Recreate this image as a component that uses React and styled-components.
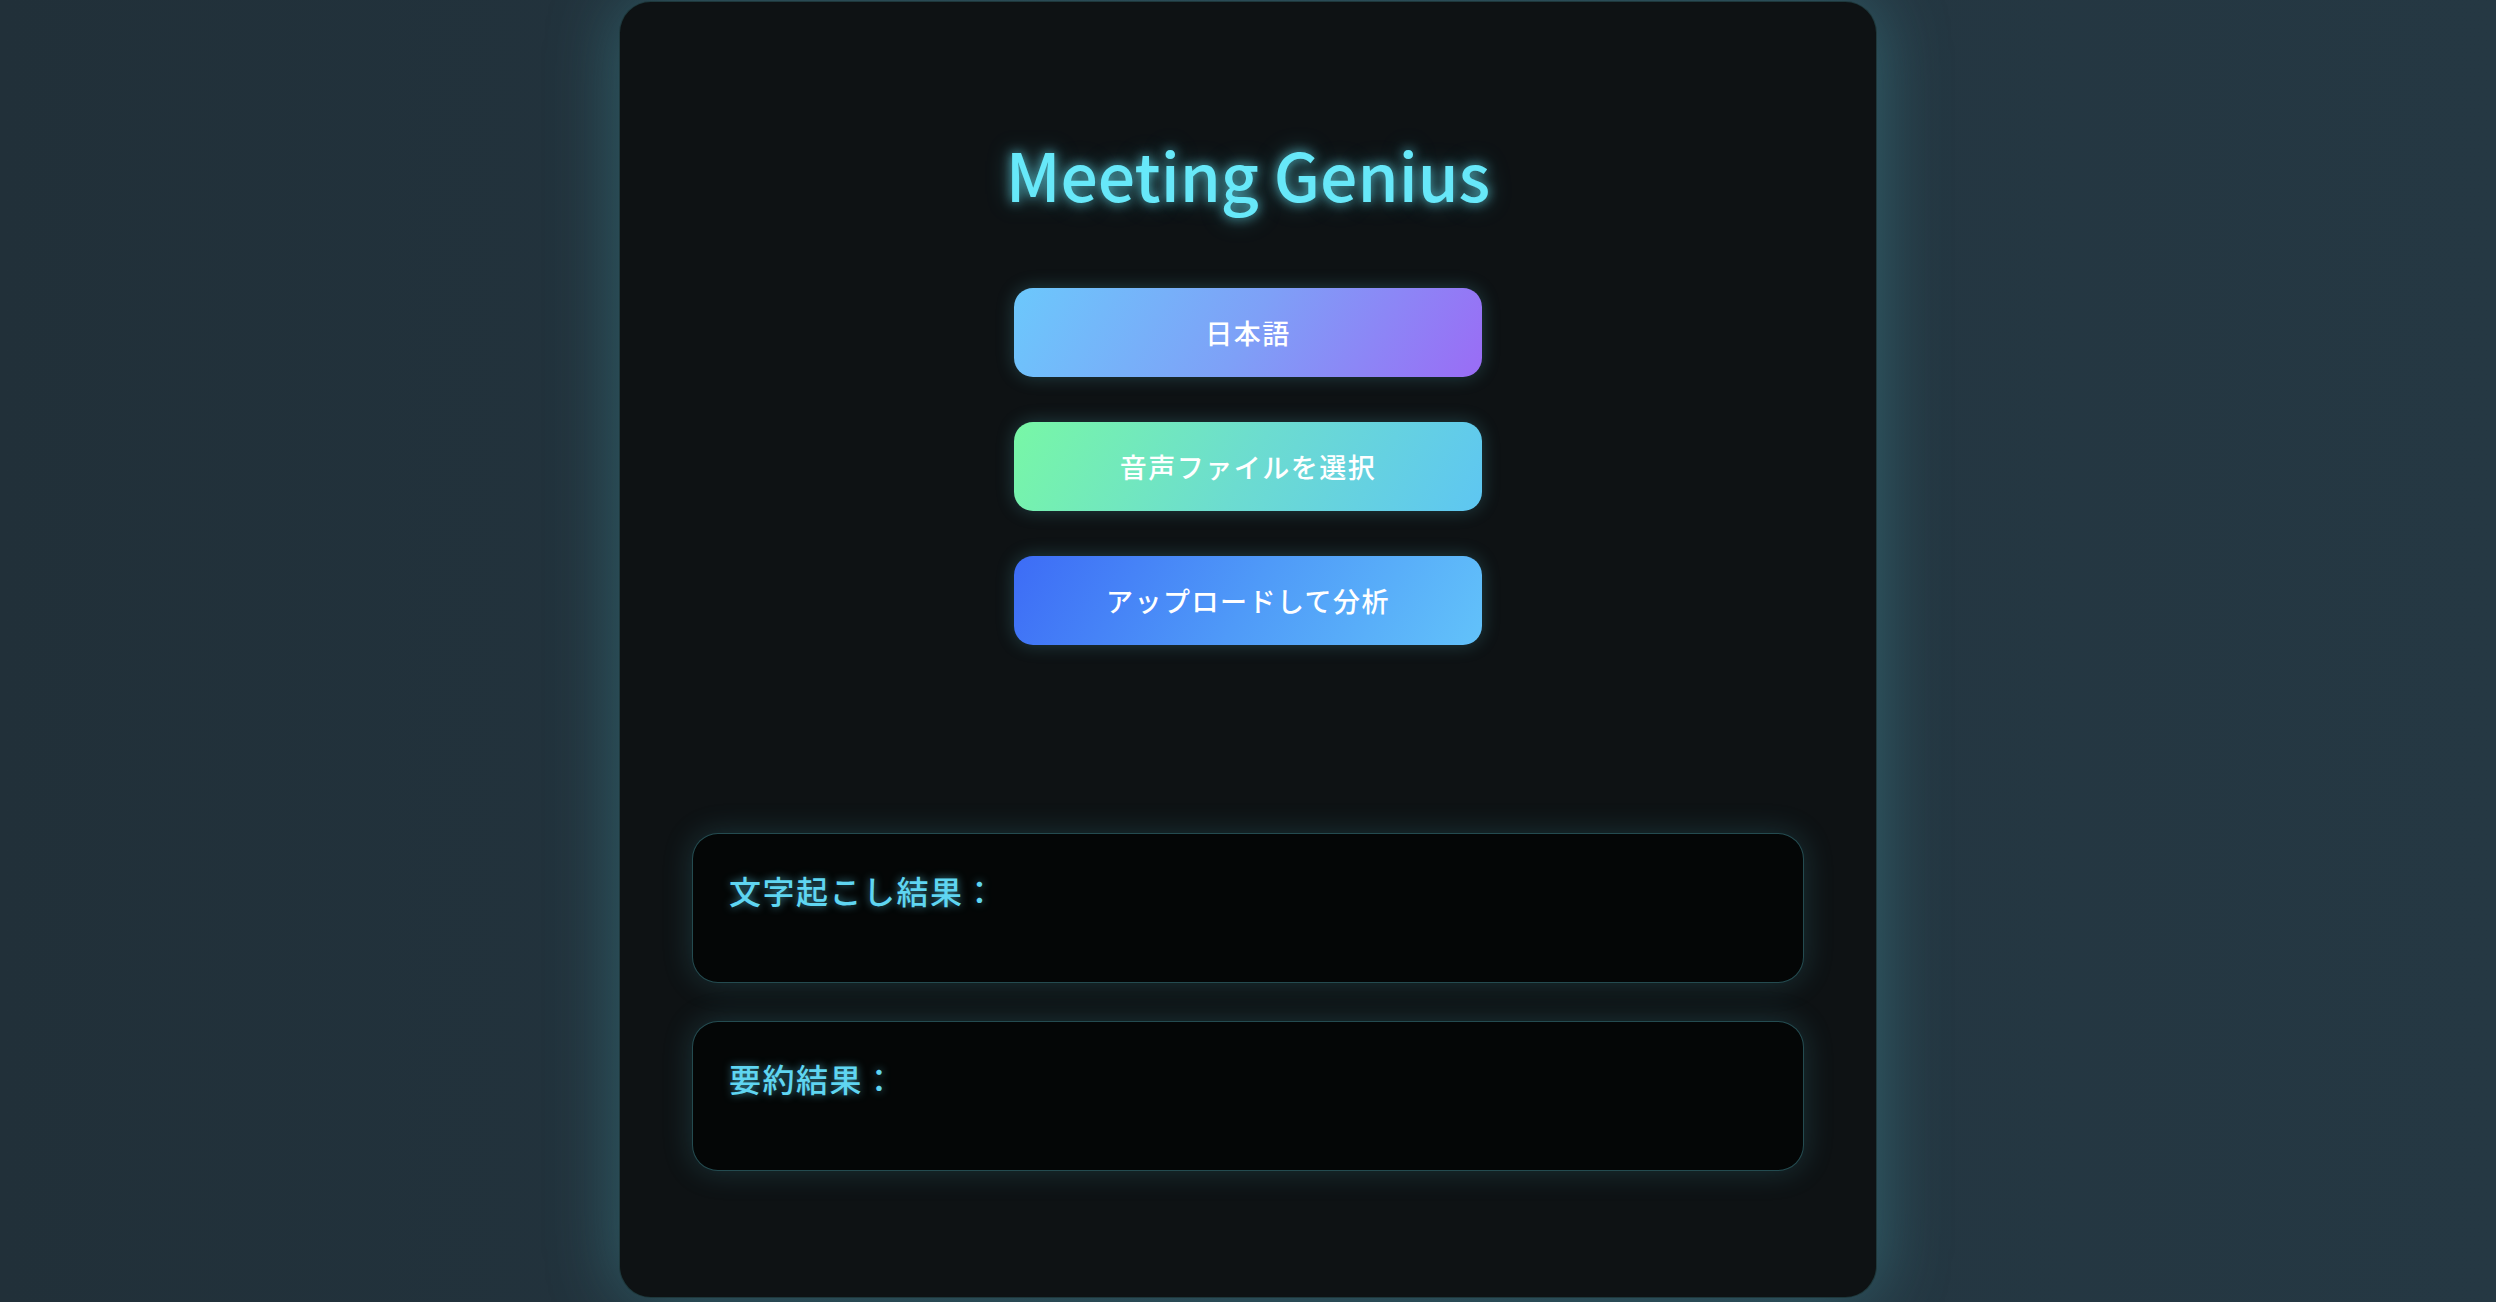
import React from "react";
import styled, { createGlobalStyle } from "styled-components";

const GlobalStyle = createGlobalStyle`
    html, body {
        margin: 0;
        padding: 0;
    }
    body {
        min-height: 100vh;
        background: linear-gradient(90deg, #213039 0%, #233540 50%, #253843 100%);
        font-family: "Noto Sans CJK JP", "Noto Sans", sans-serif;
    }
`;

const Page = styled.div`
    display: flex;
    justify-content: center;
    padding-top: 1px;
    min-height: 100vh;
    box-sizing: border-box;
`;

const Card = styled.div`
    width: 1258px;
    height: 1297px;
    box-sizing: border-box;
    background: #0e1214;
    border: 1px solid rgba(80, 170, 180, 0.25);
    border-radius: 32px;
    box-shadow: 0 0 70px rgba(72, 170, 180, 0.4);
    padding: 131px 72px 0;
    display: flex;
    flex-direction: column;
    align-items: center;
`;

const Title = styled.h1`
    margin: 0;
    font-size: 66px;
    line-height: 80px;
    font-weight: 500;
    color: #67e8f9;
    text-shadow: 0 0 12px rgba(103, 232, 249, 0.75), 0 0 24px rgba(103, 232, 249, 0.35);
`;

const ButtonStack = styled.div`
    display: flex;
    flex-direction: column;
    gap: 45px;
    margin-top: 75px;
`;

const Button = styled.button`
    width: 468px;
    height: 89px;
    border: none;
    border-radius: 19px;
    background: ${props => props.$bg};
    color: #ffffff;
    font-family: "Noto Sans CJK JP", "Noto Sans", sans-serif;
    font-size: 27px;
    font-weight: 500;
    letter-spacing: 1.5px;
    display: flex;
    align-items: center;
    justify-content: center;
    box-shadow: 0 0 18px rgba(90, 200, 210, 0.25);
    cursor: pointer;
`;

const Results = styled.div`
    align-self: stretch;
    display: flex;
    flex-direction: column;
    gap: 38px;
    margin-top: 188px;
`;

const ResultBox = styled.div`
    height: 150px;
    box-sizing: border-box;
    background: #040606;
    border: 1px solid rgba(75, 160, 170, 0.45);
    border-radius: 26px;
    box-shadow: 0 0 30px rgba(72, 170, 180, 0.22);
    padding: 32px 36px;
`;

const ResultLabel = styled.h3`
    margin: 0;
    font-size: 32px;
    line-height: 48px;
    font-weight: 500;
    letter-spacing: 1.5px;
    color: #5fd5f1;
    text-shadow: 0 0 8px rgba(95, 215, 242, 0.6);
`;

const buttons = [
    { label: "日本語", bg: "linear-gradient(120deg, #6cc8fc 0%, #7ea0f7 50%, #9a6cf5 100%)" },
    { label: "音声ファイルを選択", bg: "linear-gradient(120deg, #78f7a6 0%, #6cdcd0 50%, #5ec6f2 100%)" },
    { label: "アップロードして分析", bg: "linear-gradient(120deg, #3d6cf6 0%, #4f9af8 50%, #62c2fa 100%)" },
];

const App = () => {
    return (
        <React.Fragment>
            <GlobalStyle />
            <Page>
                <Card>
                    <Title>Meeting Genius</Title>
                    <ButtonStack>
                        {buttons.map(b => (
                            <Button key={b.label} $bg={b.bg}>{b.label}</Button>
                        ))}
                    </ButtonStack>
                    <Results>
                        <ResultBox>
                            <ResultLabel>文字起こし結果：</ResultLabel>
                        </ResultBox>
                        <ResultBox>
                            <ResultLabel>要約結果：</ResultLabel>
                        </ResultBox>
                    </Results>
                </Card>
            </Page>
        </React.Fragment>
    );
};

export default App;
